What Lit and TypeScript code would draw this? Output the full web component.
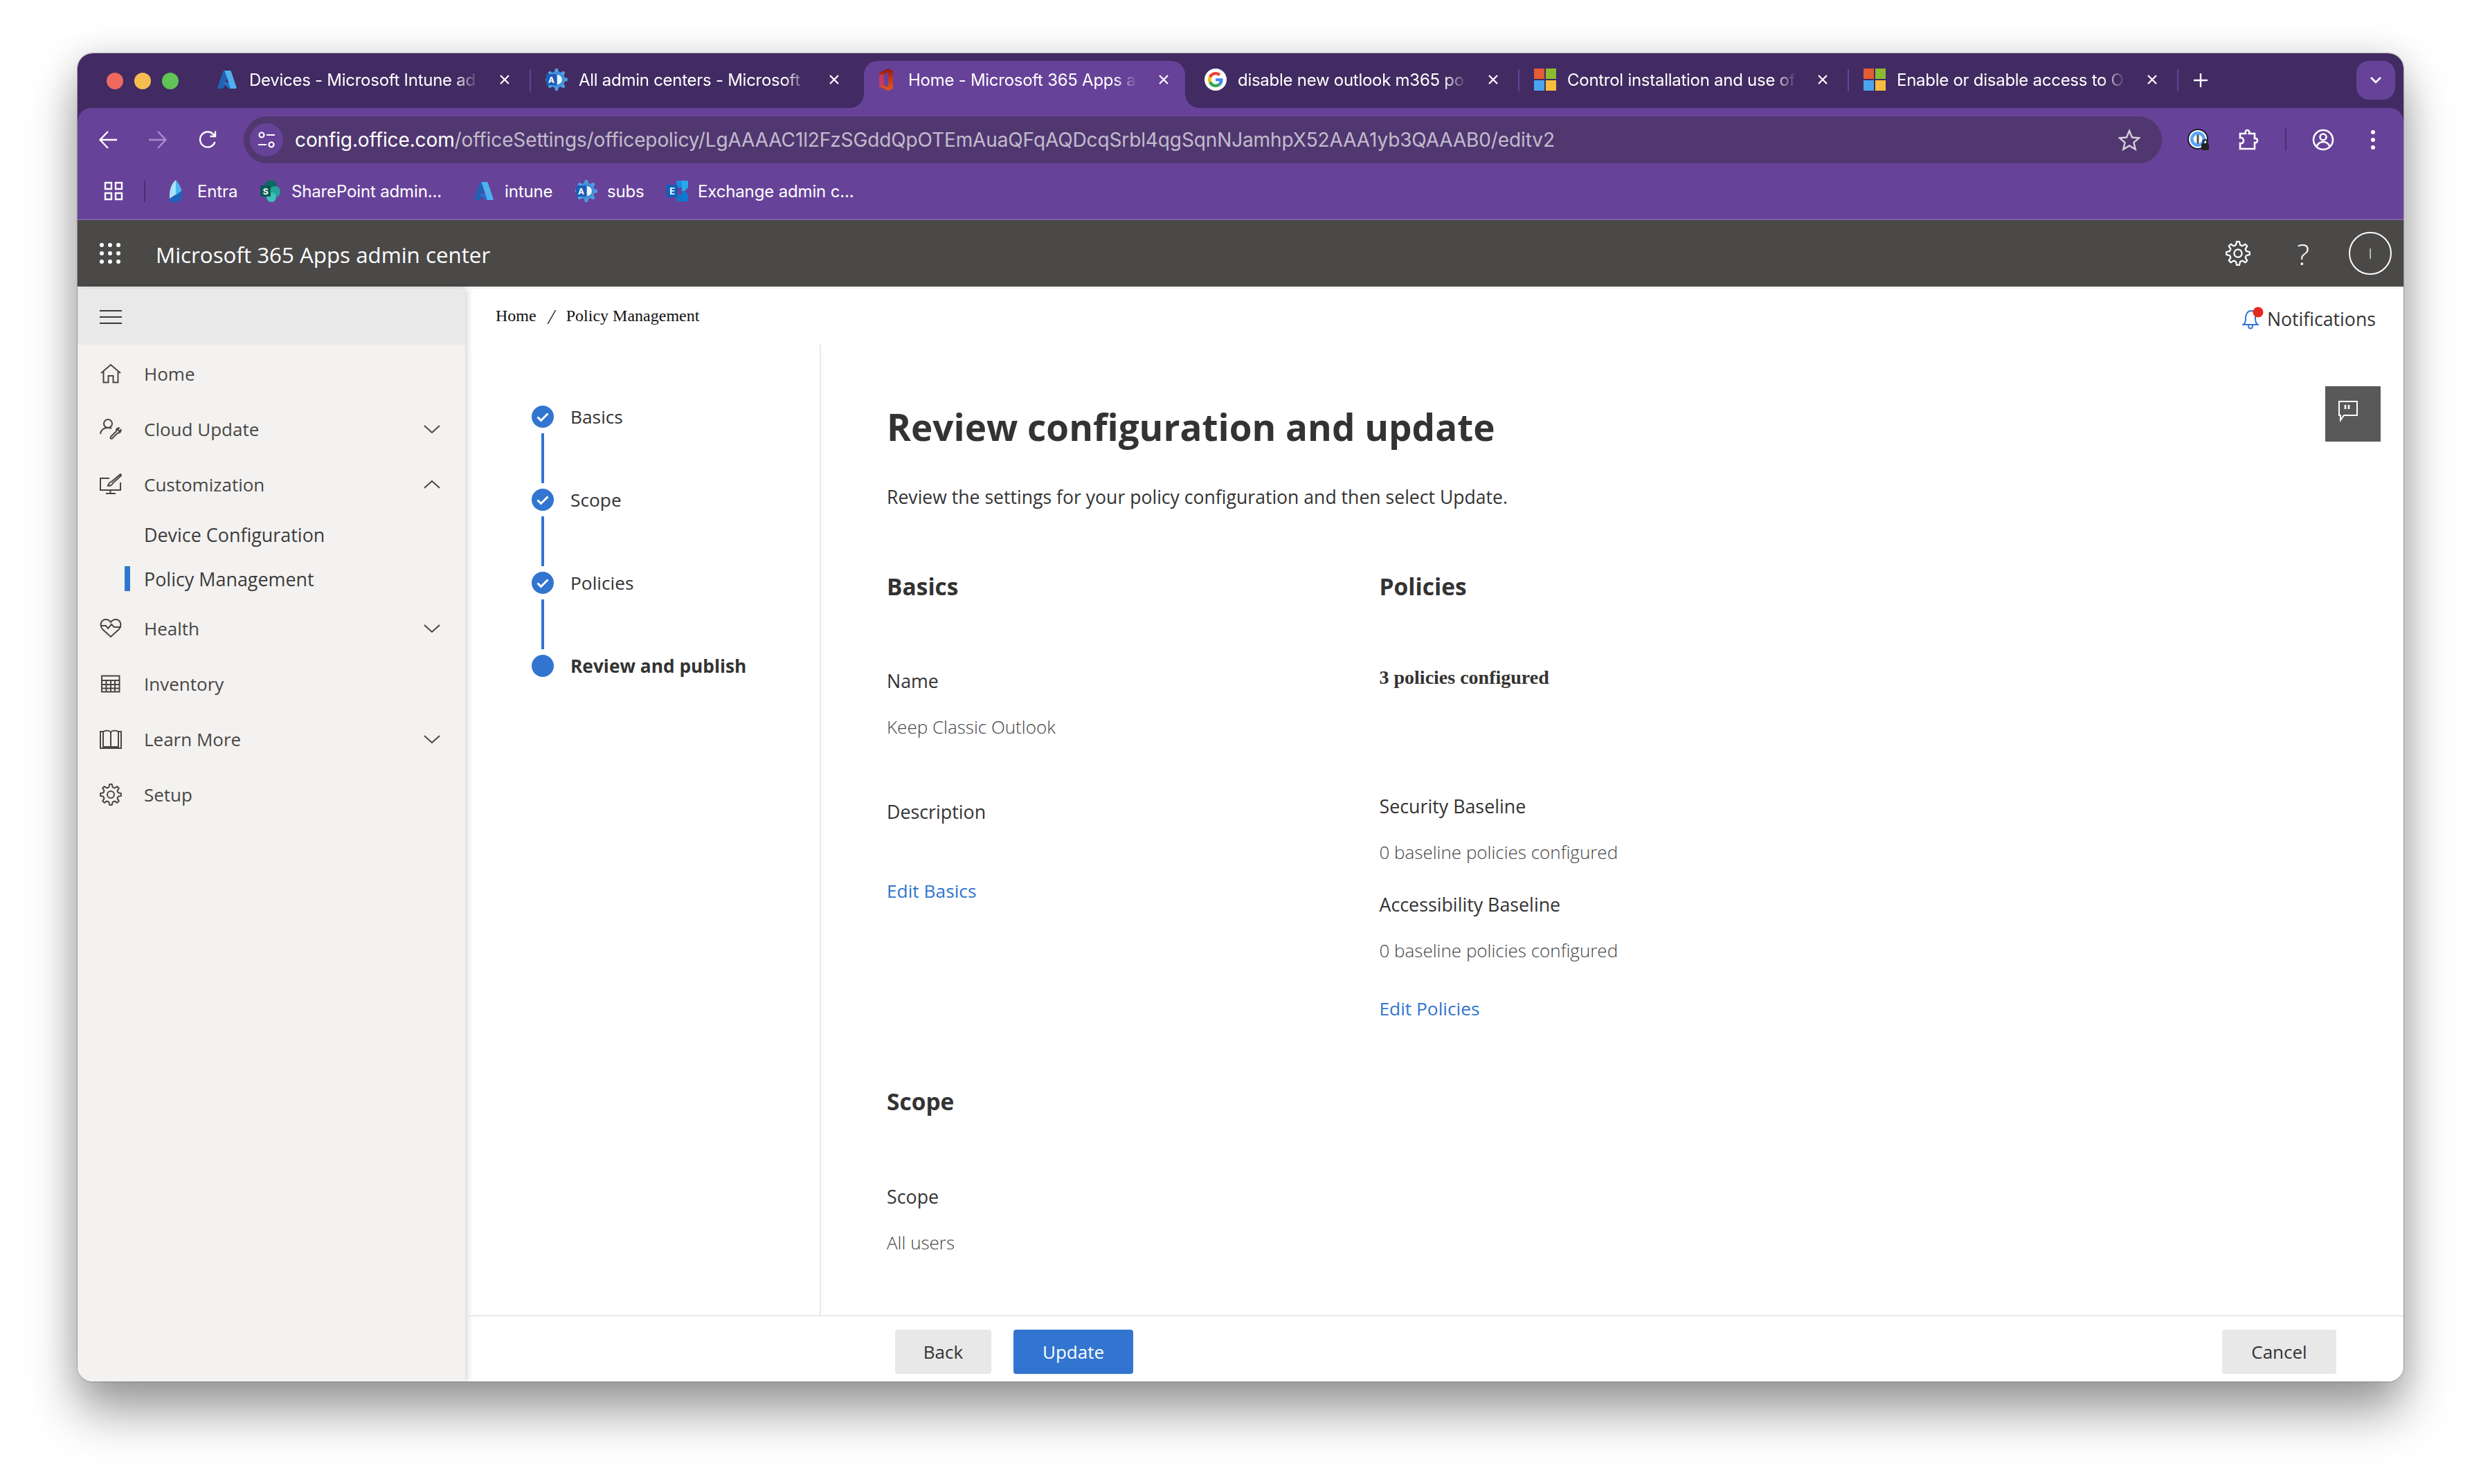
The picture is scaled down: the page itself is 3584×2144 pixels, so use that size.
import { LitElement, html, svg, css } from "lit";
import { customElement } from "lit/decorators.js";

function gearPath(c: number, r1: number, r2: number, n: number): string {
  const pts: string[] = [];
  const step = (Math.PI * 2) / n;
  for (let i = 0; i < n; i++) {
    const a = i * step - Math.PI / 2;
    const w = step * 0.2;
    const list: [number, number][] = [
      [r2, a - step * 0.32],
      [r1, a - w * 0.75],
      [r1, a + w * 0.75],
      [r2, a + step * 0.32],
    ];
    for (const [r, t] of list) pts.push(`${(c + r * Math.cos(t)).toFixed(2)} ${(c + r * Math.sin(t)).toFixed(2)}`);
  }
  return "M" + pts.join("L") + "Z";
}

const azure = html`<svg width="30" height="30" viewBox="0 0 96 96"><path fill="#1f63b5" d="M33.34 6.54h26.04l-27.03 80.1a4.15 4.15 0 0 1-3.94 2.81H8.15a4.14 4.14 0 0 1-3.93-5.47L29.4 9.38a4.15 4.15 0 0 1 3.94-2.83z"/><path fill="#2a6fcb" d="M71.17 60.26H29.88a1.91 1.91 0 0 0-1.3 3.31l26.53 24.76a4.17 4.17 0 0 0 2.85 1.12h23.38z"/><path fill="#4fb0ef" d="M66.6 9.36a4.14 4.14 0 0 0-3.93-2.82H33.65a4.15 4.15 0 0 1 3.93 2.82l25.18 74.62a4.15 4.15 0 0 1-3.93 5.48h29.02a4.15 4.15 0 0 0 3.93-5.48z"/></svg>`;
const adGear = html`<svg width="32" height="32" viewBox="0 0 32 32"><path fill="#4c9fe3" d="${gearPath(16, 16, 12, 8)}"/><circle cx="16" cy="16" r="11" fill="#3f8fd9"/><path d="M17 9a7 7 0 0 1 0 14z" fill="#e9f1fa"/><rect x="1" y="8" width="15" height="16" rx="1.5" fill="#1f5bb5"/><text x="8.5" y="21" font-size="12" font-family="Inter, sans-serif" font-weight="700" text-anchor="middle" fill="#fff">A</text></svg>`;
const office = html`<svg width="28" height="32" viewBox="0 0 28 32"><defs><linearGradient id="og" x1="0" y1="0" x2="0" y2="1"><stop offset="0" stop-color="#8f1a14"/><stop offset=".5" stop-color="#c9391a"/><stop offset="1" stop-color="#e4581f"/></linearGradient></defs><path fill-rule="evenodd" fill="url(#og)" d="M17 0 4 6v20l13 6 7-3V3zM10.500 9 17 5.500v21L10.500 24z"/><path fill="#c43a72" d="M4 9h3.500l3-1v16l-6.500 2z" opacity=".85"/></svg>`;
const google = html`<span class="gbadge"><svg width="22" height="22" viewBox="0 0 48 48"><path fill="#EA4335" d="M24 9.5c3.54 0 6.71 1.22 9.21 3.6l6.85-6.85C35.9 2.38 30.47 0 24 0 14.62 0 6.51 5.38 2.56 13.22l7.98 6.19C12.43 13.72 17.74 9.5 24 9.5z"/><path fill="#4285F4" d="M46.98 24.55c0-1.57-.15-3.09-.38-4.55H24v9.02h12.94c-.58 2.96-2.26 5.48-4.78 7.18l7.73 6c4.51-4.18 7.09-10.36 7.09-17.65z"/><path fill="#FBBC05" d="M10.53 28.59c-.48-1.45-.76-2.99-.76-4.59s.27-3.14.76-4.59l-7.98-6.19C.92 16.46 0 20.12 0 24c0 3.88.92 7.54 2.56 10.78l7.97-6.19z"/><path fill="#34A853" d="M24 48c6.48 0 11.93-2.13 15.89-5.81l-7.73-6c-2.15 1.45-4.92 2.3-8.16 2.3-6.26 0-11.57-4.22-13.47-9.91l-7.98 6.19C6.51 42.62 14.62 48 24 48z"/></svg></span>`;
const ms = html`<svg width="32" height="32" viewBox="0 0 32 32"><rect width="15" height="15" fill="#e35c33"/><rect x="17" width="15" height="15" fill="#8bbb30"/><rect y="17" width="15" height="15" fill="#4aa5ee"/><rect x="17" y="17" width="15" height="15" fill="#f9bc3e"/></svg>`;
const entra = html`<svg width="32" height="32" viewBox="0 0 32 32"><path fill="#a5e3f7" d="M15 0C9 5 5 14 6 27l9-6z"/><path fill="#4fb6ec" d="M15 0c4 5 8 11 9 19l-9 3z"/><path fill="#1f62bf" d="M24 15c1 4 1 9-1 12-2 3-5 5-9 5H6v-5l9-5z"/></svg>`;
const sharepoint = html`<svg width="32" height="32" viewBox="0 0 32 32"><circle cx="16" cy="9" r="9" fill="#0b6a63"/><circle cx="22" cy="17" r="8" fill="#25a39a"/><circle cx="17" cy="25" r="7" fill="#3dc0b8"/><rect x="1" y="8" width="15" height="16" rx="1.5" fill="#0a5a54"/><text x="8.5" y="21" font-size="12" font-family="Inter, sans-serif" font-weight="700" text-anchor="middle" fill="#fff">S</text></svg>`;
const exchange = html`<svg width="32" height="32" viewBox="0 0 32 32"><rect x="15" y="1" width="8" height="10" fill="#1d8fe0"/><path fill="#28a8ea" d="M23 1h9v10l-5 5h-4z"/><path fill="#0f78d4" d="M32 31v-10l-5-5h-4v15z"/><rect x="15" y="21" width="8" height="10" fill="#1474c8"/><rect x="1" y="7" width="16" height="18" rx="1.5" fill="#0f5fb8"/><text x="9" y="21" font-size="13" font-family="Inter, sans-serif" font-weight="700" text-anchor="middle" fill="#fff">E</text></svg>`;
const closeX = html`<svg class="x" width="16" height="16" viewBox="0 0 16 16"><path d="M2 2l12 12M14 2 2 14" stroke="#fff" stroke-width="2.2" fill="none"/></svg>`;

const home = html`<svg width="32" height="32" viewBox="0 0 32 32" fill="none" stroke="#484644" stroke-width="2"><path d="M2 15 16 3l14 12M5.500 13v15.500h7V19h7v9.500h7V13"/></svg>`;
const cloudUp = html`<svg width="32" height="32" viewBox="0 0 32 32" fill="none" stroke="#484644" stroke-width="2"><circle cx="12" cy="8" r="6"/><path d="M1 23c1-6 5-9 11-9 2 0 3.500.3 5 1"/><path d="m16 27 8-8c-.5-3 1.500-5 4-4.500l-2 2.500 2 2 2.500-2c.5 3-1.500 5-4.500 4.500l-8 8c-2 1-3-.5-2-2.500z"/></svg>`;
const custom = html`<svg width="32" height="32" viewBox="0 0 32 32" fill="none" stroke="#484644" stroke-width="2"><path d="M14 7H1v17h29V13M15.500 24v4.500M9 29h14"/><path d="M30 1 17 12c-3 0-4 3-5 6 3 0 6-1 7-4L31 3z"/></svg>`;
const health = html`<svg width="32" height="32" viewBox="0 0 32 32" fill="none" stroke="#484644" stroke-width="2"><path d="M4 17C0 12 1 4 8 3c4-.5 6 1 8 4 2-3 4-4.500 8-4 7 1 8 9 4 14L16 28z"/><path d="M1 12h8l3 4 5-6 4 4h10"/></svg>`;
const table = html`<svg width="32" height="32" viewBox="0 0 32 32" fill="none" stroke="#484644" stroke-width="2"><path d="M3 4.500h25.500v23H3zM3 11h25.500M3 17h25.500M3 22.500h25.500M9.500 11v16.500M16 11v16.500M22 11v16.500"/></svg>`;
const book = html`<svg width="32" height="32" viewBox="0 0 32 32" fill="none" stroke="#484644" stroke-width="2"><path d="M1 5h4v22h9c1 0 2 .5 2 1.500 0-1 1-1.500 2-1.500h9V5h4v24H1zM5 5c4-2 9-2 11 1 2-3 7-3 11-1M16 6v22"/></svg>`;
const setup = html`<svg width="32" height="32" viewBox="0 0 32 32" fill="none" stroke="#484644" stroke-width="2"><path stroke-linejoin="round" d="${gearPath(16, 15, 11, 8)}"/><circle cx="16" cy="16" r="5"/></svg>`;
const chevDown = html`<svg width="24" height="14" viewBox="0 0 24 14" fill="none" stroke="#484644" stroke-width="2"><path d="m1 2 11 10L23 2"/></svg>`;
const chevUp = html`<svg width="24" height="14" viewBox="0 0 24 14" fill="none" stroke="#484644" stroke-width="2"><path d="m1 12 11-10 11 10"/></svg>`;
const check = html`<svg width="32" height="32" viewBox="0 0 32 32"><circle cx="16" cy="16" r="16" fill="#3275d0"/><path d="m8.500 16.500 5 5 10-10" fill="none" stroke="#fff" stroke-width="3"/></svg>`;
const dot = html`<svg width="32" height="32" viewBox="0 0 32 32"><circle cx="16" cy="16" r="16" fill="#3275d0"/></svg>`;

interface Tab { icon: unknown; text: string; active?: boolean; sep?: boolean }
const tabs: Tab[] = [
  { icon: azure, text: "Devices - Microsoft Intune ad", sep: true },
  { icon: adGear, text: "All admin centers - Microsoft" },
  { icon: office, text: "Home - Microsoft 365 Apps a", active: true },
  { icon: google, text: "disable new outlook m365 po", sep: true },
  { icon: ms, text: "Control installation and use of", sep: true },
  { icon: ms, text: "Enable or disable access to O", sep: true },
];
const marks = [
  { icon: entra, text: "Entra", w: 136 },
  { icon: sharepoint, text: "SharePoint admin...", w: 308 },
  { icon: azure, text: "intune", w: 148 },
  { icon: adGear, text: "subs", w: 131 },
  { icon: exchange, text: "Exchange admin c...", w: 300 },
];
const navTop = [
  { icon: home, text: "Home" },
  { icon: cloudUp, text: "Cloud Update", chev: chevDown },
  { icon: custom, text: "Customization", chev: chevUp },
];
const navBottom = [
  { icon: health, text: "Health", chev: chevDown },
  { icon: table, text: "Inventory" },
  { icon: book, text: "Learn More", chev: chevDown },
  { icon: setup, text: "Setup" },
];
const steps = ["Basics", "Scope", "Policies"];

@customElement("app-root")
export class AppRoot extends LitElement {
  static styles = css`
    :host { display: block; width: 3584px; height: 2144px; box-sizing: border-box; padding: 77px 112px 0; background: #fff; font-family: "Open Sans", "Noto Sans", sans-serif; color: #333; }
    .win { width: 3360px; height: 1919px; border-radius: 22px; overflow: hidden; display: flex; flex-direction: column; background: #fff; }
    .shadow { border-radius: 22px; width: 3360px; height: 1919px; box-shadow: 0 0 0 1px rgba(0,0,0,.22), 0 44px 70px rgba(0,0,0,.38), 0 0 50px rgba(0,0,0,.12); }
    .chrome { font-family: Inter, "Liberation Sans", sans-serif; color: #fff; flex: none; }

    .strip { height: 79px; background: #422a62; display: flex; align-items: flex-start; padding-left: 42px; box-sizing: border-box; }
    .lights { display: flex; gap: 16px; margin-top: 28px; width: 142px; flex: none; }
    .lights i { width: 24px; height: 24px; border-radius: 50%; display: block; }
    .tab { width: 464px; height: 68px; margin-top: 11px; flex: none; display: flex; align-items: flex-start; padding: 12px 15px 0 16px; box-sizing: border-box; border-radius: 20px 20px 0 0; position: relative; font-size: 24px; }
    .tab.active { background: #674299; }
    .tab.active::before, .tab.active::after { content: ""; position: absolute; bottom: 0; width: 20px; height: 20px; }
    .tab.active::before { left: -20px; background: radial-gradient(circle at 0 0, transparent 19.5px, #674299 20px); }
    .tab.active::after { right: -20px; background: radial-gradient(circle at 100% 0, transparent 19.5px, #674299 20px); }
    .fav { width: 32px; height: 32px; display: flex; align-items: center; justify-content: center; flex: none; }
    .gbadge { width: 32px; height: 32px; border-radius: 50%; background: #fff; display: flex; align-items: center; justify-content: center; }
    .tab .fav { margin-top: -1px; }
    .ttl { width: 331px; margin-left: 16px; white-space: nowrap; overflow: hidden; line-height: 32px; letter-spacing: -0.27px; -webkit-mask-image: linear-gradient(90deg, #000 90%, transparent 100%); mask-image: linear-gradient(90deg, #000 90%, transparent 100%); flex: none; }
    .close { margin-left: 22px; width: 32px; height: 32px; display: flex; align-items: center; justify-content: center; flex: none; margin-top: -1px; }
    .sepslot { width: 12px; flex: none; display: flex; justify-content: center; margin-top: 23px; height: 32px; }
    .sepslot i { width: 2px; height: 32px; background: #674299; display: block; }
    .plus { margin: 27px 0 0 15px; flex: none; display: block; }
    .more { margin: 11px 12px 0 auto; width: 56px; height: 56px; border-radius: 18px; background: #674299; display: flex; align-items: center; justify-content: center; flex: none; }

    .bar { background: #674299; border-radius: 20px 20px 0 0; height: 162px; padding-top: 12px; box-sizing: border-box; border-bottom: 2px solid #7d5cab; }
    .wrapbar { background: #422a62; }
    .tools { display: flex; align-items: center; height: 68px; padding: 0 8px; }
    .slot { width: 72px; height: 64px; display: flex; align-items: center; justify-content: center; flex: none; }
    .addr { margin-left: 16px; flex: 1; min-width: 0; height: 68px; border-radius: 34px; background: #50376f; display: flex; align-items: center; padding-right: 31px; }
    .chip { width: 48px; height: 48px; border-radius: 50%; background: #674299; margin-left: 9px; display: flex; align-items: center; justify-content: center; flex: none; }
    .url { margin-left: 17px; font-size: 28px; white-space: nowrap; color: rgba(255,255,255,.68); letter-spacing: -0.12px; }
    .url b { font-weight: 400; color: #fff; }
    .star { margin-left: auto; display: block; flex: none; }
    .vsep { width: 2px; height: 32px; background: #4b2f70; flex: none; }
    .marks { display: flex; align-items: center; height: 64px; margin-top: 8px; padding-left: 38px; font-size: 24px; letter-spacing: -0.15px; }
    .mark { display: flex; align-items: center; gap: 14px; flex: none; white-space: nowrap; }

    .dark { height: 96px; flex: none; background: #4a4948; color: #fff; display: flex; align-items: center; padding: 0 17px 0 31px; box-sizing: border-box; }
    .dark h1 { margin: 3px 0 0 50px; font-size: 31.3px; font-weight: 500; font-family: "Open Sans", sans-serif; white-space: nowrap; }
    .dark .gear { margin-left: auto; margin-right: 60px; display: block; }
    .q { font-size: 42px; font-weight: 300; width: 32px; text-align: center; margin-right: 50px; font-family: "Open Sans", sans-serif; }
    .avatar { width: 62px; height: 62px; border-radius: 50%; border: 2px solid #fff; box-sizing: border-box; display: flex; align-items: center; justify-content: center; font-size: 20px; font-weight: 300; }

    .body { flex: 1; display: flex; min-height: 0; border-top: 3px solid #f4f4f4; }
    .side { width: 560px; flex: none; background: #f3f2f1; box-shadow: 2px 0 10px rgba(0,0,0,.2); display: flex; flex-direction: column; position: relative; font-size: 26px; color: #484644; }
    .shead { height: 81px; background: #e9e9e9; padding-left: 32px; display: flex; flex-direction: column; justify-content: center; gap: 7px; margin-bottom: 2px; flex: none; }
    .shead i { display: block; width: 32px; height: 2px; background: #3a3a3a; }
    .row { height: 80px; display: flex; align-items: center; padding: 0 36px 0 32px; flex: none; }
    .row .lab { margin-left: 32px; }
    .row .ch { margin-left: auto; display: block; margin-top: -6px; }
    .sub { height: 64px; display: flex; align-items: center; padding-left: 96px; flex: none; color: #3d3b3a; font-size: 26.9px; }
    .sub.on { padding-left: 68px; }
    .sub.on i { width: 8px; height: 36px; background: #3275d0; margin-right: 20px; display: block; }

    .main { flex: 1; display: flex; flex-direction: column; min-width: 0; position: relative; }
    .top { height: 81px; display: flex; align-items: center; justify-content: space-between; padding: 0 40px 0 44px; flex: none; box-sizing: border-box; }
    .crumb { font-family: "Liberation Serif", serif; font-size: 24px; color: #111; display: flex; align-items: center; margin-top: -2px; }
    .crumb span { margin: 0 17px; font-family: "Open Sans", sans-serif; font-size: 28px; font-style: italic; font-weight: 300; }
    .notif { display: flex; align-items: center; font-size: 26.7px; color: #333; margin-top: 6px; }
    .notif svg { display: block; margin-right: 4px; margin-left: -4px; }
    .fb { position: absolute; top: 141px; right: 33px; width: 80px; height: 80px; background: #595959; display: flex; align-items: center; justify-content: center; }
    .fb svg { display: block; margin: -8px 14px 0 0; }
    .mid { flex: 1; display: flex; min-height: 0; }
    .steps { flex: none; border-right: 2px solid #e8e8e8; padding: 88px 0 0 96px; box-sizing: content-box; width: 416px; font-size: 26.3px; }
    .step { display: flex; align-items: center; gap: 24px; height: 32px; }
    .step svg { display: block; flex: none; }
    .step.cur { font-weight: 700; color: #333; }
    .conn { width: 4px; height: 72px; background: #3275d0; margin: 8px 0 8px 14px; }
    .content { flex: 1; padding: 81px 0 0 95px; overflow: hidden; box-sizing: border-box; }
    h2.title { margin: 0; font-size: 53px; font-weight: 700; line-height: 76px; color: #333; white-space: nowrap; }
    .lead { margin: 43px 0 0; line-height: 40px; font-size: 26.6px; color: #333; white-space: nowrap; }
    .cols { display: grid; grid-template-columns: 711.5px 1fr; margin-top: 85px; }
    h3 { margin: 0; font-size: 33.5px; line-height: 48px; font-weight: 700; color: #333; }
    .lbl { line-height: 40px; font-size: 26.8px; font-weight: 500; color: #333; }
    .val { line-height: 40px; font-size: 26px; font-weight: 300; color: #444; margin-top: 26px; }
    .link { line-height: 40px; font-size: 26.3px; color: #3275d0; }
    .serif { font-family: "Liberation Serif", serif; font-weight: 700; font-size: 28px; line-height: 40px; color: #333; margin-top: 88px; }
    .foot { height: 96px; flex: none; border-top: 2px solid #e8e8e8; box-sizing: border-box; display: flex; padding: 19px 97px 0 621px; }
    .btn { height: 64px; border-radius: 4px; background: #e8e8e8; display: flex; align-items: center; justify-content: center; font-size: 26px; font-weight: 500; color: #333; box-sizing: border-box; flex: none; }
    .back { width: 139px; }
    .upd { width: 173px; background: #3275d0; color: #fff; margin-left: 32px; }
    .cancel { width: 165px; margin-left: auto; }
  `;

  render() {
    return html`<div class="shadow"><div class="win">
      <div class="chrome">
        <div class="strip">
          <div class="lights"><i style="background:#ee6a5f"></i><i style="background:#f5bd4f"></i><i style="background:#61c454"></i></div>
          ${tabs.map((t) => html`
            <div class="tab ${t.active ? "active" : ""}">
              <span class="fav">${t.icon}</span><span class="ttl">${t.text}</span><span class="close">${closeX}</span>
            </div>
            <div class="sepslot">${t.sep ? html`<i></i>` : ""}</div>`)}
          <svg class="plus" width="24" height="24" viewBox="0 0 24 24"><path d="M12 2v20M2 12h20" stroke="#fff" stroke-width="2.4"/></svg>
          <div class="more"><svg width="20" height="12" viewBox="0 0 20 12" fill="none" stroke="#fff" stroke-width="2.6"><path d="m3 2 7 7 7-7"/></svg></div>
        </div>
        <div class="wrapbar"><div class="bar">
          <div class="tools">
            <div class="slot"><svg width="28" height="28" viewBox="0 0 28 28" fill="none" stroke="#fff" stroke-width="2.4"><path d="M27 14H3M14 2 2.500 14 14 26"/></svg></div>
            <div class="slot"><svg width="28" height="28" viewBox="0 0 28 28" fill="none" stroke="#a78fca" stroke-width="2.4"><path d="M1 14h24M14 2l11.500 12L14 26"/></svg></div>
            <div class="slot"><svg width="28" height="28" viewBox="0 0 28 28" fill="none" stroke="#fff" stroke-width="2.4"><path d="M24.500 17a11 11 0 1 1-2-10.500L25 9M25 1.500V9h-7.500"/></svg></div>
            <div class="addr">
              <span class="chip"><svg width="28" height="28" viewBox="0 0 28 28" fill="none" stroke="#fff" stroke-width="2.2"><circle cx="7" cy="7" r="3.500"/><path d="M14 7h12M2 21h12"/><circle cx="21" cy="21" r="3.500"/></svg></span>
              <span class="url"><b>config.office.com</b>/officeSettings/officepolicy/LgAAAAC1l2FzSGddQpOTEmAuaQFqAQDcqSrbl4qgSqnNJamhpX52AAA1yb3QAAAB0/editv2</span>
              <svg class="star" width="32" height="32" viewBox="0 0 32 32" fill="none" stroke="#d5d0dd" stroke-width="2.4"><path d="m16 3 4 9.500 10 .8-7.600 6.600 2.300 9.900L16 24.500 7.300 29.800l2.300-9.900L2 13.300l10-.8z"/></svg>
            </div>
            <div class="slot" style="margin-left:17px"><svg width="32" height="32" viewBox="0 0 32 32"><circle cx="15" cy="15" r="15" fill="#1b1b2e"/><circle cx="15" cy="15" r="13" fill="#fff"/><circle cx="15" cy="15" r="11" fill="#5aa4f5"/><circle cx="15" cy="15" r="6.500" fill="#fff"/><rect x="13.500" y="8" width="3" height="14" rx="1.500" fill="#50505a"/><rect x="20" y="21" width="11" height="10" rx="2" fill="#222"/><path d="M22.500 21v-2a3 3 0 0 1 6 0v2" fill="none" stroke="#222" stroke-width="2"/></svg></div>
            <div class="slot"><svg width="32" height="32" viewBox="0 0 32 32" fill="none" stroke="#fff" stroke-width="2.6"><path d="M4 7h8c-1-3 .5-5 2.500-5s3.500 2 2.500 5h8v7c2-.5 4 .5 4 3s-2 3.500-4 3v9H4v-8c3 1 5-1 5-3.500S7 12 4 13z"/></svg></div>
            <div class="vsep" style="margin:0 17px 0 17px"></div>
            <div class="slot"><svg width="32" height="32" viewBox="0 0 32 32" fill="none" stroke="#fff" stroke-width="2.6"><circle cx="16" cy="16" r="14"/><circle cx="16" cy="12" r="4.500"/><path d="M7 25c2-5 5-6 9-6s7 1 9 6"/></svg></div>
            <div class="slot"><svg width="8" height="30" viewBox="0 0 8 30" fill="#fff"><circle cx="4" cy="4" r="3"/><circle cx="4" cy="15" r="3"/><circle cx="4" cy="26" r="3"/></svg></div>
          </div>
          <div class="marks">
            <svg width="28" height="28" viewBox="0 0 28 28" fill="none" stroke="#fff" stroke-width="2.4"><path d="M2 2h9v9H2zM17 2h9v9h-9zM2 17h9v9H2zM17 17h9v9h-9z"/></svg>
            <div class="vsep" style="margin:0 29px 0 30px"></div>
            ${marks.map((m) => html`<div class="mark" style="width:${m.w}px"><span class="fav">${m.icon}</span><span>${m.text}</span></div>`)}
          </div>
        </div></div>
      </div>
      <div class="dark">
        <svg width="32" height="32" viewBox="0 0 32 32" fill="#fff">${[4, 16, 28].map((y) => [4, 16, 28].map((x) => svg`<circle cx="${x}" cy="${y}" r="3"></circle>`))}</svg>
        <h1>Microsoft 365 Apps admin center</h1>
        <svg class="gear" width="36" height="36" viewBox="0 0 32 32" fill="none" stroke="#fff" stroke-width="2"><path stroke-linejoin="round" d="${gearPath(16, 15, 11, 8)}"/><circle cx="16" cy="16" r="5"/></svg>
        <div class="q">?</div>
        <div class="avatar">I</div>
      </div>
      <div class="body">
        <aside class="side">
          <div class="shead"><i></i><i></i><i></i></div>
          ${navTop.map((n) => html`<div class="row">${n.icon}<span class="lab">${n.text}</span>${n.chev ? html`<span class="ch">${n.chev}</span>` : ""}</div>`)}
          <div class="sub">Device Configuration</div>
          <div class="sub on"><i></i>Policy Management</div>
          ${navBottom.map((n) => html`<div class="row">${n.icon}<span class="lab">${n.text}</span>${n.chev ? html`<span class="ch">${n.chev}</span>` : ""}</div>`)}
        </aside>
        <div class="main">
          <div class="top">
            <div class="crumb">Home<span>/</span>Policy Management</div>
            <div class="notif"><svg width="34" height="36" viewBox="0 0 34 36" fill="none"><path d="M4 26c2-2 3-4 3-9 0-6 3-11 8-11 3 0 5 2 6 5v6c0 5 1 7 3 9zM2 26h24M11 27c0 6 6 6 6 0" stroke="#3275d0" stroke-width="2"/><circle cx="25" cy="8" r="7.500" fill="#e62a1e"/></svg>Notifications</div>
          </div>
          <div class="fb"><svg width="30" height="32" viewBox="0 0 30 32" fill="none" stroke="#fff" stroke-width="2"><path d="M2 2h26v20H9l-5 7v-7H2z"/><path d="M11 7v6M16 7v6" stroke-width="2.600"/></svg></div>
          <div class="mid">
            <div class="steps">
              ${steps.map((s) => html`<div class="step">${check}<span>${s}</span></div><div class="conn"></div>`)}
              <div class="step cur">${dot}<span>Review and publish</span></div>
            </div>
            <div class="content">
              <h2 class="title">Review configuration and update</h2>
              <p class="lead">Review the settings for your policy configuration and then select Update.</p>
              <div class="cols">
                <div>
                  <h3>Basics</h3>
                  <div class="lbl" style="margin-top:93px">Name</div>
                  <div class="val">Keep Classic Outlook</div>
                  <div class="lbl" style="margin-top:83px">Description</div>
                  <div class="link" style="margin-top:74px">Edit Basics</div>
                </div>
                <div>
                  <h3>Policies</h3>
                  <div class="serif">3 policies configured</div>
                  <div class="lbl" style="margin-top:146px">Security Baseline</div>
                  <div class="val">0 baseline policies configured</div>
                  <div class="lbl" style="margin-top:36px">Accessibility Baseline</div>
                  <div class="val">0 baseline policies configured</div>
                  <div class="link" style="margin-top:44px">Edit Policies</div>
                </div>
              </div>
              <h3 style="margin-top:90px">Scope</h3>
              <div class="lbl" style="margin-top:94px">Scope</div>
              <div class="val">All users</div>
            </div>
          </div>
          <div class="foot">
            <div class="btn back">Back</div>
            <div class="btn upd">Update</div>
            <div class="btn cancel">Cancel</div>
          </div>
        </div>
      </div>
    </div></div>`;
  }
}
